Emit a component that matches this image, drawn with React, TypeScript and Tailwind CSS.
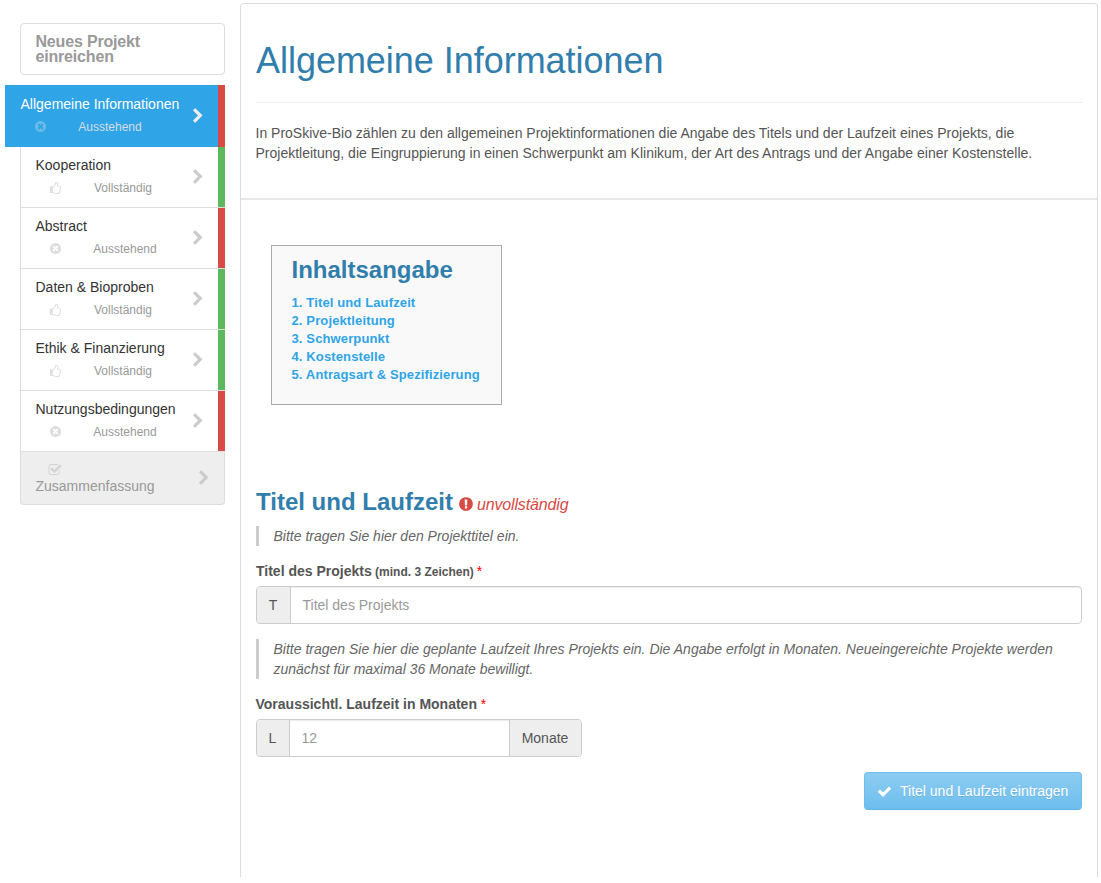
import React from 'react';

const PATHS = {
  chevron:
    'M1363 877l-742 742q-19 19-45 19t-45-19l-166-166q-19-19-19-45t19-45l531-531-531-531q-19-19-19-45t19-45l166-166q19-19 45-19t45 19l742 742q19 19 19 45t-19 45z',
  timesCircle:
    'M1277 1122q0-26-19-45l-181-181 181-181q19-19 19-45 0-27-19-46l-90-90q-19-19-46-19-26 0-45 19l-181 181-181-181q-19-19-45-19-27 0-46 19l-90 90q-19 19-19 46 0 26 19 45l181 181-181 181q-19 19-19 45 0 27 19 46l90 90q19 19 46 19 26 0 45-19l181-181 181 181q19 19 45 19 27 0 46-19l90-90q19-19 19-46zm387-226q0 209-103 385.5t-279.5 279.5-385.5 103-385.5-103-279.5-279.5-103-385.5 103-385.5 279.5-279.5 385.5-103 385.5 103 279.5 279.5 103 385.5z',
  check:
    'M1671 566q0 40-28 68l-724 724-136 136q-28 28-68 28t-68-28l-136-136-362-362q-28-28-28-68t28-68l136-136q28-28 68-28t68 28l294 295 656-657q28-28 68-28t68 28l136 136q28 28 28 68z',
  exclamation:
    'M896 128q209 0 385.5 103t279.5 279.5 103 385.5-103 385.5-279.5 279.5-385.5 103-385.5-103-279.5-279.5-103-385.5 103-385.5 279.5-279.5 385.5-103zm128 1247v-190q0-14-9-23.5t-22-9.5h-192q-13 0-23 10t-10 23v190q0 13 10 23t23 10h192q13 0 22-9.5t9-23.5zm-2-344l18-621q0-12-10-18-10-8-24-8h-220q-14 0-24 8-10 6-10 18l17 621q0 10 10 17.5t24 7.5h185q14 0 23.5-7.5t10.5-17.5z',
  checkSquare:
    'M1472 930v318q0 119-84.5 203.5t-203.5 84.5h-832q-119 0-203.5-84.5t-84.5-203.5v-832q0-119 84.5-203.5t203.5-84.5h832q63 0 117 25 15 7 18 23 3 17-9 29l-49 49q-10 10-23 10-3 0-9-2-23-6-45-6h-832q-66 0-113 47t-47 113v832q0 66 47 113t113 47h832q66 0 113-47t47-113v-254q0-13 9-22l64-64q10-10 23-10 6 0 12 3 20 8 20 29zm231-489l-814 814q-24 24-57 24t-57-24l-430-430q-24-24-24-57t24-57l110-110q24-24 57-24t57 24l263 263 647-647q24-24 57-24t57 24l110 110q24 24 24 57t-24 57z',
  thumbsUp:
    'M256 1408q0-26-19-45t-45-19-45 19-19 45 19 45 45 19 45-19 19-45zm1152-512q0-51-39-89.5t-89-38.5h-352q0-58 48-159.5t48-160.5q0-98-32-145t-128-47q-26 26-38 85t-30.5 125.5-59.5 109.5q-22 23-77 91-4 5-23 30t-31.5 41-34.5 42.5-40 44-38.5 35.5-40 27-35.5 9h-32v640h32q13 0 31.5 3t33 6.5 38 11 35 11.5 35.5 12.5 29 10.5q211 73 342 73h121q192 0 192-167 0-26-5-56 30-16 47.5-52.5t17.5-73.5-18-69q53-50 53-119 0-25-10-55.5t-25-47.5q32-1 53.5-47t21.5-81zm128-1q0 89-49 163 9 33 9 69 0 77-38 144 3 21 3 43 0 101-60 178 1 139-85 219.5t-227 80.5h-129q-96 0-189.5-22.5t-216.5-65.5q-116-40-138-40h-288q-53 0-90.5-37.5t-37.5-90.5v-640q0-53 37.5-90.5t90.5-37.5h274q36-24 137-155 58-75 107-128 24-25 35.5-85.5t30.5-126.5 62-108q39-37 90-37 84 0 151 32.5t102 101.5 35 186q0 93-48 192h176q104 0 180 76t76 179z',
};

function Icon({ name, className }: { name: keyof typeof PATHS; className: string }) {
  const x = name === 'thumbsUp' ? -128 : 0;
  return (
    <svg viewBox={`${x} 0 1792 1792`} className={`block shrink-0 ${className}`} fill="currentColor">
      <path d={PATHS[name]} />
    </svg>
  );
}

interface Step {
  label: string;
  done: boolean;
  active?: boolean;
}

const STEPS: Step[] = [
  { label: 'Allgemeine Informationen', done: false, active: true },
  { label: 'Kooperation', done: true },
  { label: 'Abstract', done: false },
  { label: 'Daten & Bioproben', done: true },
  { label: 'Ethik & Finanzierung', done: true },
  { label: 'Nutzungsbedingungen', done: false },
];

function StepItem({ label, done, active }: Step) {
  const box = active
    ? '-ml-[15px] h-[62px] bg-[#2fa4e7] pl-[15px] text-white'
    : 'h-[61px] border-b border-l border-[#ddd] pl-[14px] text-[#333]';
  return (
    <li className={`flex ${box}`}>
      <div className={`flex-1 ${active ? 'pt-[9px]' : 'pt-[8px]'}`}>
        <div className="pl-[0.5px] text-sm leading-5 whitespace-nowrap">{label}</div>
        <div className="flex h-[26px] items-center">
          <Icon
            name={done ? 'thumbsUp' : 'timesCircle'}
            className={`-mt-px ml-[14px] size-[13px] ${active ? 'text-[#6bb9e6]' : 'text-[#ddd]'}`}
          />
          <span
            className={`-mt-px w-[90px] text-center text-xs ${done ? 'ml-[16px]' : 'ml-[18px]'} ${active ? 'text-[#d4dde3]' : 'text-[#999]'}`}
          >
            {done ? 'Vollständig' : 'Ausstehend'}
          </span>
        </div>
      </div>
      <Icon
        name="chevron"
        className={`mr-[12.5px] size-4 ${active ? 'mt-[23px] text-[#eee]' : 'mt-[22px] text-[#ccc]'}`}
      />
      <div className={`w-[7px] ${done ? 'bg-[#5cb85c]' : 'bg-[#d84a44]'}`} />
    </li>
  );
}

const CONTENTS = [
  '1. Titel und Laufzeit',
  '2. Projektleitung',
  '3. Schwerpunkt',
  '4. Kostenstelle',
  '5. Antragsart & Spezifizierung',
];

function Hint({ children }: { children: React.ReactNode }) {
  return (
    <p className="border-l-[3px] border-[#ccc] pl-[14.5px] text-sm leading-5 text-[#666] italic">{children}</p>
  );
}

export default function App() {
  return (
    <div
      className="flex h-[883px] w-[1101px] overflow-hidden bg-white text-[#555]"
      style={{ fontFamily: '"Liberation Sans", Arial, sans-serif' }}
    >
      <aside className="w-[225px] shrink-0 pt-[23px] pl-5">
        <div className="h-[52px] rounded border border-[#ddd] pt-[10px] pl-[14.5px] text-base leading-[15px] font-bold tracking-[-0.18px] text-[#999]">
          Neues Projekt
          <br />
          einreichen
        </div>
        <ul className="mt-[10px]">
          {STEPS.map((s) => (
            <StepItem key={s.label} {...s} />
          ))}
          <li className="flex h-[53px] rounded-b border border-t-0 border-[#ddd] bg-[#eee] pl-[14px] text-[#999]">
            <div className="flex-1 pt-[10px]">
              <Icon name="checkSquare" className="ml-[13px] size-[14px] translate-y-px text-[#d4d4d4]" />
              <div className="pl-[0.5px] text-sm leading-5">Zusammenfassung</div>
            </div>
            <Icon name="chevron" className="mt-[18px] mr-[12.5px] size-4 text-[#ccc]" />
          </li>
        </ul>
      </aside>

      <main className="mt-[3px] ml-[15px] h-[874px] w-[858px] shrink-0 rounded-t border border-b-0 border-[#ddd]">
        <header className="h-[196px] border-b-2 border-[#e7e7e7] px-[15px] pt-[37px]">
          <h1 className="h-[62px] border-b border-[#eee] text-4xl leading-10 tracking-[-0.03px] text-[#317eac]">
            Allgemeine Informationen
          </h1>
          <p className="mt-5 -ml-[0.5px] text-sm leading-5">
            In ProSkive-Bio zählen zu den allgemeinen Projektinformationen die Angabe des Titels und der Laufzeit eines
            Projekts, die
            <br />
            Projektleitung, die Eingruppierung in einen Schwerpunkt am Klinikum, der Art des Antrags und der Angabe einer
            Kostenstelle.
          </p>
        </header>

        <nav className="mt-[45px] ml-[30px] h-[160px] w-[231px] border border-[#aaa] bg-[#f9f9f9] pt-[10px] pl-[19.5px]">
          <h3 className="text-2xl leading-[28px] font-bold text-[#317eac]">Inhaltsangabe</h3>
          <ul className="mt-[10px] text-[13px] leading-[18px] font-bold tracking-[0.13px] text-[#2fa4e7]">
            {CONTENTS.map((c) => (
              <li key={c} className="whitespace-nowrap">
                {c}
              </li>
            ))}
          </ul>
        </nav>

        <section className="mt-[82px] px-[15px]">
          <div className="flex h-[30px] items-baseline">
            <h3 className="text-2xl leading-[30px] font-bold text-[#317eac]">Titel und Laufzeit</h3>
            <Icon name="exclamation" className="ml-[5px] size-4 translate-y-[2px] text-[#d84a44]" />
            <span className="ml-[3px] text-base tracking-[-0.14px] text-[#d84a44] italic">unvollständig</span>
          </div>
          <div className="mt-[9px]">
            <Hint>Bitte tragen Sie hier den Projekttitel ein.</Hint>
          </div>

          <label className="mt-[15px] block text-sm leading-5 font-bold">
            Titel des Projekts <small className="-ml-[0.5px] text-xs">(mind. 3 Zeichen)</small>{' '}
            <span className="-ml-px font-normal text-[red]">*</span>
          </label>
          <div className="mt-[5px] flex h-[38px] overflow-hidden rounded border border-[#ccc] text-sm leading-9">
            <span className="w-[34px] border-r border-[#ccc] bg-[#eee] pr-px text-center">T</span>
            <span className="flex-1 pl-[11.5px] text-[#999] shadow-[inset_0_1px_1px_rgba(0,0,0,0.075)]">
              Titel des Projekts
            </span>
          </div>

          <div className="mt-[15px]">
            <Hint>
              Bitte tragen Sie hier die geplante Laufzeit Ihres Projekts ein. Die Angabe erfolgt in Monaten.
              Neueingereichte Projekte werden
              <br />
              zunächst für maximal 36 Monate bewilligt.
            </Hint>
          </div>

          <label className="mt-[15px] -ml-[0.5px] block text-sm leading-5 font-bold">
            Voraussichtl. Laufzeit in Monaten <span className="font-normal text-[red]">*</span>
          </label>
          <div className="mt-[5px] flex h-[38px] w-[326px] overflow-hidden rounded border border-[#ccc] text-sm leading-9">
            <span className="w-[33px] border-r border-[#ccc] bg-[#eee] pr-px text-center">L</span>
            <span className="flex-1 pl-[11.5px] text-[#999] shadow-[inset_0_1px_1px_rgba(0,0,0,0.075)]">12</span>
            <span className="w-[72px] border-l border-[#ccc] bg-[#eee] pr-px text-center">Monate</span>
          </div>

          <div className="mt-[15px] flex justify-end">
            <button className="flex h-[38px] w-[218px] items-center rounded border border-[#6dbdee] border-b-[#5fb3e6] bg-linear-to-b from-[#8dccf1] to-[#6dbeee] pl-3 text-sm whitespace-nowrap text-white [text-shadow:0_1px_0_rgba(0,0,0,0.1)]">
              <Icon name="check" className="size-[15px]" />
              <span className="ml-2">Titel und Laufzeit eintragen</span>
            </button>
          </div>
        </section>
      </main>
    </div>
  );
}
